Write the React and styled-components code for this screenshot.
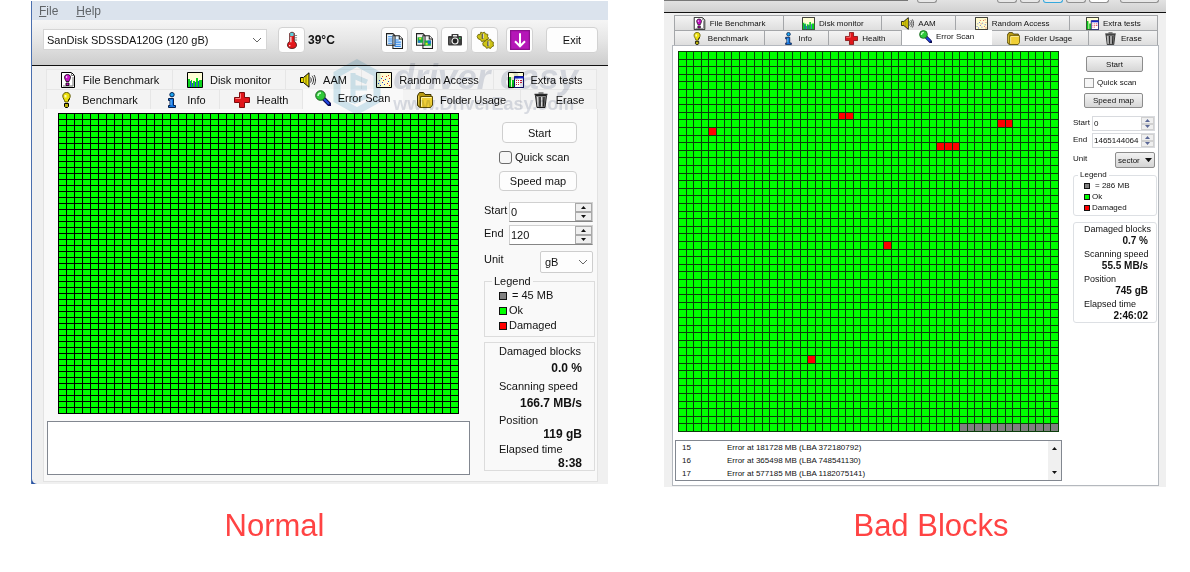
/* eslint-disable react/prop-types */
import React, { useId } from 'react';
import styled, { createGlobalStyle, css, ThemeProvider } from 'styled-components';

const modern = {
  flat: true,
  font: 11,
  labelFont: 11,
  valueFont: 12,
  icon: 16,
  tabHeight: 20,
  tabGap: 7,
  tabBg: '#f3f3f3',
  tabLine: '#e6e6e6',
  line: '#dcdcdc',
  panelBg: '#f9f9f9',
  fieldBorder: '#d0d0d0',
  swatch: 8,
};

const classic = {
  flat: false,
  font: 8,
  labelFont: 9,
  valueFont: 10,
  icon: 13,
  tabHeight: 15,
  tabGap: 4,
  tabBg: 'linear-gradient(#f4f4f4, #dedede)',
  tabLine: '#a4a6a9',
  line: '#dde0e4',
  panelBg: '#ffffff',
  fieldBorder: '#d8dade',
  swatch: 6,
};

const COLS = 50;
const ROWS = 50;

const cleanDrive = {
  width: 401,
  height: 301,
  line: '#000000',
  damaged: [],
  pending: 0,
};

const badDrive = {
  width: 381,
  height: 381,
  line: '#0b3d0b',
  damaged: [[4, 10, 1], [21, 8, 2], [42, 9, 2], [34, 12, 3], [27, 25, 1], [17, 40, 1]],
  pending: 13,
};

/* icons */

function Svg({ children, size }) {
  return (
    <IconBox viewBox="0 0 16 16" $size={size} aria-hidden="true">
      {children}
    </IconBox>
  );
}

const FileMark = () => (
  <Svg>
    <path d="M1.5.5h10l3 3v12h-13z" fill="#fff" stroke="#000" />
    <path d="M11.5.5v3h3M13 5v9H3" fill="none" stroke="#777" />
    <path d="M7.5 2.5c-2 0-3 1.300-3 2.800 0 1.600 1.200 2.700 1.500 4.200h3c.3-1.500 1.500-2.600 1.500-4.200 0-1.500-1-2.800-3-2.800z" fill="#c411c4" stroke="#000" strokeWidth=".8" />
    <path d="M6 11h3v2.500H6z" fill="#c411c4" stroke="#000" strokeWidth=".8" />
    <path d="M6 4.200h1.200v1.500H6z" fill="#fff" />
  </Svg>
);

const Monitor = () => (
  <Svg>
    <path d="M.5.500h15v15H.5z" fill="#ffffd5" stroke="#000" />
    <path d="M1 7h2v2h1v-1h1v7H1zM6 9h2v1h1V6h2v9H6zM12 8h3v7h-3z" fill="#0bd31c" />
    <path d="M3 9h1v6H3zM5 11h1v4H5zM8 10h1v5H8zM11 9h1v6h-1z" fill="#2645d8" />
  </Svg>
);

const Speaker = () => (
  <Svg>
    <path d="M.500 5.500h3L9 .800v14.400L3.500 10.500h-3z" fill="#e8d90c" stroke="#000" />
    <path d="M3.500 5.500v5M6 3.500v9" stroke="#6b6400" strokeWidth=".8" />
    <path d="M10.500 5.500c1 1.500 1 3.500 0 5M12 3.800c2 2.400 2 6 0 8.400M14 3c2 3 2 7 0 10" fill="none" stroke="#333" />
  </Svg>
);

const Scatter = () => (
  <Svg>
    <path d="M.5.500h15v15H.5z" fill="#fffbcf" stroke="#000" />
    <path d="M2 11h1v1H2zM4 13h1v1H4zM3 8h1v1H3zM6 10h1v1H6zM5 6h1v1H5zM9 7h1v1H9zM8 12h1v1H8zM12 9h1v1h-1z" fill="#1f3bd6" />
    <path d="M7 8h1v1H7zM10 4h1v1h-1zM12 3h1v1h-1zM11 11h1v1h-1zM13 6h1v1h-1zM6 4h1v1H6zM13 13h1v1h-1z" fill="#d8321f" />
  </Svg>
);

const Extra = () => (
  <Svg>
    <path d="M.5.500h15v15H.5z" fill="#ffffd5" stroke="#000" />
    <path d="M1 5h2v10H1zM4 8h2v7H4z" fill="#08c61a" />
    <path d="M6.500 4.500h9v11h-9z" fill="#fff" stroke="#10106b" />
    <path d="M6.500 5.500h9" stroke="#1524c8" strokeWidth="2" />
    <path d="M8 8h1v1H8zM10 8h1v1h-1zM12 8h2v1h-2zM8 10h1v1H8zM10 10h1v1h-1zM12 10h2v1h-2zM8 12h1v1H8zM10 12h1v1h-1z" fill="#d51d3c" />
  </Svg>
);

const Bulb = () => (
  <Svg>
    <path d="M7.500.500c-2.300 0-3.700 1.500-3.700 3.600 0 2.300 1.700 3.400 2.200 5.900h3c.5-2.500 2.200-3.600 2.200-5.900 0-2.100-1.400-3.600-3.700-3.600z" fill="#ecdf0b" stroke="#5e5800" />
    <path d="M5.500 11.500h4v3l-1 1h-2l-1-1z" fill="#b9ad08" stroke="#000" />
    <path d="M5.500 3h2v2.500h-2z" fill="#fffbb8" />
    <path d="M10.500 6.500L9.300 9" stroke="#000" />
  </Svg>
);

const InfoMark = () => (
  <Svg>
    <circle cx="8" cy="2.700" r="2.200" fill="#19a3f0" stroke="#06204e" />
    <path d="M4.500 6.500h5v7h2v2h-7v-2h1.500v-5H4.500z" fill="#1273e0" stroke="#06204e" />
    <path d="M7 8v5" stroke="#7cc8ff" />
  </Svg>
);

const Cross = () => (
  <Svg>
    <path d="M5.500.500h5v5h5v5h-5v5h-5v-5h-5v-5h5z" fill="#e0161b" stroke="#7d0b0d" />
    <path d="M6.500 6.500v-5M1.500 6.500h5" stroke="#ff8585" />
  </Svg>
);

const Magnifier = () => (
  <Svg>
    <path d="M8.500 8.500l6 6" stroke="#0a0a50" strokeWidth="4" strokeLinecap="round" />
    <path d="M9 9l5 5" stroke="#2148e6" strokeWidth="2" />
    <circle cx="5.500" cy="5.500" r="4.800" fill="#2fc93a" stroke="#1c5a20" />
    <path d="M3 6c0-2 1-3 3-3" fill="none" stroke="#c8ffca" strokeWidth="1.500" />
  </Svg>
);

const Folder = () => (
  <Svg>
    <path d="M.500 3.500l2-3h4l1.500 2h6v11l-1 2h-10l-2.500-2z" fill="#b89a12" stroke="#3c3202" />
    <path d="M3.500 4.500h12v8.500l-2 2.500h-10z" fill="#f0cf35" stroke="#5d4e06" />
    <path d="M4.500 6v8.500M4.500 5.500h10" stroke="#fff3ae" />
    <path d="M1.500 4v9" stroke="#e8cc4a" />
  </Svg>
);

const Bin = () => (
  <Svg>
    <path d="M2.500 3.500h11l-1.500 12H4z" fill="#8a8a8a" stroke="#1b1b1b" />
    <path d="M1.500 2.500h13" stroke="#2b2b2b" strokeWidth="1.500" />
    <path d="M5.500 1h5" stroke="#2b2b2b" />
    <path d="M7 5v9.500M11 5l-.5 9.500" stroke="#222" strokeWidth="1.300" />
    <path d="M4.500 5l.5 9.500M8.500 5v9.500" stroke="#dadada" />
  </Svg>
);

const Thermometer = () => (
  <Svg size={18}>
    <path d="M6 2q2-2 4 0v7q2 1.500 2 3.300Q12 15.500 8 15.500T4 12.300Q4 10.500 6 9z" fill="#e3171b" stroke="#4b1212" strokeWidth=".8" />
    <path d="M6.400 1.500h3v3h-3z" fill="#59d3df" />
    <path d="M7 5v5M6 12.500v1" stroke="#fff" />
    <path d="M10.500 4h2M10.500 6h2M10.500 8h2" stroke="#777" strokeWidth=".8" />
  </Svg>
);

const CopyText = () => (
  <Svg size={17}>
    <path d="M.500 1.500h6l2 2v9h-8zM6.500 3.500h6l3 3v9h-9z" fill="#e9f7ff" stroke="#222" />
    <path d="M2 4.500h4M2 6.500h4M2 8.500h4M2 10.500h4M8 7.500h4M8 9.500h6M8 11.500h6M8 13.500h6" stroke="#2d83e8" />
    <path d="M12.500 3.500v3h3" fill="#fff" stroke="#222" />
  </Svg>
);

const CopyImage = () => (
  <Svg size={17}>
    <path d="M.500 1.500h6l2 2v9h-8zM6.500 3.500h6l3 3v9h-9z" fill="#f1f1f1" stroke="#222" />
    <path d="M1.500 5h5v5h-5zM8 8h6v5H8z" fill="#18b03a" />
    <path d="M2 8h2v2H2zM11 8h3v3h-3z" fill="#1c6fd6" />
    <path d="M3 5.500h2v1.500H3zM9 10h2v2H9z" fill="#e7e32c" />
    <path d="M12.500 3.500v3h3" fill="#fff" stroke="#222" />
  </Svg>
);

const Camera = () => (
  <Svg size={16}>
    <path d="M1 5q0-1 1-1h2.500V2.500Q4.500 2 5 2h6q.5 0 .5.5V4H14q1 0 1 1v7q0 1.500-1 1.500H2q-1 0-1-1.500z" fill="#3a3a3a" />
    <path d="M6 3h4v1.500H6z" fill="#eee" />
    <circle cx="8" cy="9" r="3" fill="#222" stroke="#eee" strokeWidth="1.200" />
    <path d="M12 5.500h1.500v1.500H12z" fill="#39d452" />
    <path d="M3 6v6" stroke="#777" />
  </Svg>
);

const Gears = () => (
  <Svg size={18}>
    <g fill="#cfc416" stroke="#6a6305" strokeWidth=".8">
      <path d="M1 5l1-2 1.500.3L4.300 1l1.600.6L7.500 1l1 1.600 2 .4-.2 2 1 1.500-1.500 1L9 9.300l-2-.5-2 .6-1-1.700L2 7z" />
      <path d="M6 11l1-1.700L8.300 9l1-1.500 2 .5 1.700-.6.700 1.700 1.800.900-.3 1.700.6 1.500-1.800.800-1 1.500-1.900-.6-1.800.5-1-1.700-1.900-.7z" />
    </g>
    <path d="M5.800 2.500v4.500M10.700 9v4.500" stroke="#5a5a5a" strokeWidth="1.500" />
    <path d="M6.600 2.500v4M11.500 9v4" stroke="#fff" strokeWidth=".6" />
  </Svg>
);

const ArrowDown = () => (
  <Svg size={20}>
    <path d="M.500.500h15v15H.5z" fill="#b516b8" stroke="#8a108d" />
    <path d="M8 2.500v10M4 9l4 4 4-4" fill="none" stroke="#fff" strokeWidth="1.600" />
  </Svg>
);

const Chevron = () => (
  <Mark viewBox="0 0 10 6" $width={10} aria-hidden="true">
    <path d="M1 1l4 4 4-4" fill="none" stroke="#666" />
  </Mark>
);

const Triangle = ({ up, width = 5 }) => (
  <Mark viewBox="0 0 10 6" $width={width} aria-hidden="true">
    <path d={up ? 'M0 6l5-6 5 6z' : 'M0 0l5 6 5-6z'} fill="currentColor" />
  </Mark>
);

const topTabs = [
  { label: 'File Benchmark', Icon: FileMark },
  { label: 'Disk monitor', Icon: Monitor },
  { label: 'AAM', Icon: Speaker },
  { label: 'Random Access', Icon: Scatter },
  { label: 'Extra tests', Icon: Extra },
];

const bottomTabs = [
  { label: 'Benchmark', Icon: Bulb },
  { label: 'Info', Icon: InfoMark },
  { label: 'Health', Icon: Cross },
  { label: 'Error Scan', Icon: Magnifier, active: true },
  { label: 'Folder Usage', Icon: Folder },
  { label: 'Erase', Icon: Bin },
];

function Tabs({ top, bottom }) {
  return (
    <div role="tablist">
      {[[topTabs, top], [bottomTabs, bottom]].map(([tabs, columns]) => (
        <TabRow key={columns} $columns={columns}>
          {tabs.map(({ label, Icon, active }) => (
            <Tab key={label} type="button" role="tab" aria-selected={!!active} $active={active}>
              <Icon />
              {label}
            </Tab>
          ))}
        </TabRow>
      ))}
    </div>
  );
}

function BlockMap({ drive }) {
  const { width, height, line, damaged, pending } = drive;
  const w = (width - 1) / COLS;
  const h = (height - 1) / ROWS;
  let lines = '';
  for (let i = 0; i <= COLS; i += 1) lines += `M${Math.round(i * w) + 0.5} 0V${height}`;
  for (let i = 0; i <= ROWS; i += 1) lines += `M0 ${Math.round(i * h) + 0.5}H${width}`;

  return (
    <Map viewBox={`0 0 ${width} ${height}`} preserveAspectRatio="none" $height={height} role="img" aria-label="Block map">
      <rect width={width} height={height} fill="#00ff00" />
      {damaged.map(([x, y, n]) => (
        <rect key={`${x}-${y}`} x={x * w} y={y * h} width={n * w} height={h} fill="#ff0000" />
      ))}
      <rect x={(COLS - pending) * w} y={(ROWS - 1) * h} width={pending * w} height={h} fill="#808080" />
      <path d={lines} stroke={line} />
    </Map>
  );
}

function NumberField({ label, value }) {
  const id = useId();
  return (
    <FieldRow>
      <label htmlFor={id}>{label}</label>
      <Spinner>
        <input id={id} type="text" defaultValue={value} />
        <SpinButtons>
          <button type="button" aria-label={`${label} up`}><Triangle up /></button>
          <button type="button" aria-label={`${label} down`}><Triangle /></button>
        </SpinButtons>
      </Spinner>
    </FieldRow>
  );
}

function Controls({ end, unit, block, stats, flat }) {
  const id = useId();
  return (
    <Side>
      <Actions>
        <PushButton type="button">Start</PushButton>
        <Check>
          <input type="checkbox" />
          Quick scan
        </Check>
        <PushButton type="button" $low>Speed map</PushButton>
      </Actions>
      <Fields>
        <NumberField label="Start" value="0" />
        <NumberField label="End" value={end} />
        <FieldRow $unit>
          <label htmlFor={id}>Unit</label>
          <UnitSelect>
            <select id={id} defaultValue={unit}>
              <option>{unit}</option>
            </select>
            {flat ? <Chevron /> : <Triangle width={7} />}
          </UnitSelect>
        </FieldRow>
      </Fields>
      <Legend>
        <legend>Legend</legend>
        <LegendItem $color="#808080" $wide>{`= ${block}`}</LegendItem>
        <LegendItem $color="#00ff00">Ok</LegendItem>
        <LegendItem $color="#ff0000">Damaged</LegendItem>
      </Legend>
      <Stats>
        {stats.map(([name, value], i) => (
          <Stat key={name} $tight={i > 1}>
            <dt>{name}</dt>
            <dd>{value}</dd>
          </Stat>
        ))}
      </Stats>
    </Side>
  );
}

function NormalWindow() {
  return (
    <ThemeProvider theme={modern}>
      <Window>
        <MenuBar>
          <button type="button"><u>F</u>ile</button>
          <button type="button"><u>H</u>elp</button>
        </MenuBar>
        <Toolbar>
          <DriveSelect>
            <select aria-label="Drive" defaultValue="SanDisk SDSSDA120G (120 gB)">
              <option>SanDisk SDSSDA120G (120 gB)</option>
            </select>
            <Chevron />
          </DriveSelect>
          <ToolButton type="button" aria-label="Temperature"><Thermometer /></ToolButton>
          <Temperature>39°C</Temperature>
          <Tools>
            <ToolButton type="button" aria-label="Copy text"><CopyText /></ToolButton>
            <ToolButton type="button" aria-label="Copy image"><CopyImage /></ToolButton>
            <ToolButton type="button" aria-label="Screenshot"><Camera /></ToolButton>
            <ToolButton type="button" aria-label="Options"><Gears /></ToolButton>
          </Tools>
          <ToolButton type="button" aria-label="Save"><ArrowDown /></ToolButton>
          <ExitButton type="button">Exit</ExitButton>
        </Toolbar>
        <Body>
          <Tabs top="127fr 113fr 76fr 132fr 103fr" bottom="105fr 69fr 83fr 100fr 118fr 76fr" />
          <Panel>
            <Main>
              <BlockMap drive={cleanDrive} />
              <Log />
            </Main>
            <Controls
              flat
              end="120"
              unit="gB"
              block="45 MB"
              stats={[['Damaged blocks', '0.0 %'], ['Scanning speed', '166.7 MB/s'], ['Position', '119 gB'], ['Elapsed time', '8:38']]}
            />
          </Panel>
          <Watermark aria-hidden="true">
            <svg viewBox="0 0 48 56" width="48" height="56">
              <path d="M24 4l20 11v26L24 52 4 41V15z" fill="none" stroke="#6fb4d2" strokeWidth="7" />
              <path d="M20 14v30M20 17l14 6M20 29h14M20 43l14-6" fill="none" stroke="#6fb4d2" strokeWidth="5" />
            </svg>
            <div>
              <Brand>driver easy</Brand>
              <Site>www.DriverEasy.com</Site>
            </div>
          </Watermark>
        </Body>
      </Window>
    </ThemeProvider>
  );
}

function BadBlocksWindow() {
  const errors = [
    [15, 'Error at 181728 MB (LBA 372180792)'],
    [16, 'Error at 365498 MB (LBA 748541130)'],
    [17, 'Error at 577185 MB (LBA 1182075141)'],
  ];
  return (
    <ThemeProvider theme={classic}>
      <Window>
        <ToolbarEdge>
          <EdgeCombo />
          <EdgeButton />
          <EdgeGap />
          <EdgeButton />
          <EdgeButton />
          <EdgeButton $hot />
          <EdgeButton />
          <EdgeButton $light />
          <EdgeButton $wide />
        </ToolbarEdge>
        <Body>
          <Tabs top="110fr 98fr 73fr 114fr 88fr" bottom="91fr 64fr 73fr 89fr 97fr 69fr" />
          <Panel>
            <Main>
              <BlockMap drive={badDrive} />
              <Log>
                <table>
                  <tbody>
                    {errors.map(([n, text]) => (
                      <tr key={n}>
                        <td>{n}</td>
                        <td>{text}</td>
                      </tr>
                    ))}
                  </tbody>
                </table>
                <ScrollBar>
                  <button type="button" aria-label="Scroll up"><Triangle up /></button>
                  <button type="button" aria-label="Scroll down"><Triangle /></button>
                </ScrollBar>
              </Log>
            </Main>
            <Controls
              end="1465144064"
              unit="sector"
              block="286 MB"
              stats={[['Damaged blocks', '0.7 %'], ['Scanning speed', '55.5 MB/s'], ['Position', '745 gB'], ['Elapsed time', '2:46:02']]}
            />
          </Panel>
        </Body>
      </Window>
    </ThemeProvider>
  );
}

function App() {
  return (
    <Page>
      <GlobalStyle />
      <Figure>
        <NormalWindow />
        <Caption $shift={-90}>Normal</Caption>
      </Figure>
      <Figure>
        <BadBlocksWindow />
        <Caption $shift={32}>Bad Blocks</Caption>
      </Figure>
    </Page>
  );
}

const GlobalStyle = createGlobalStyle`
  *, *::before {
    box-sizing: border-box;
  }

  body {
    margin: 0;
    background: white;
    color: #111;
    font-family: 'Liberation Sans', Arial, sans-serif;
  }

  button, input, select {
    font: inherit;
    color: inherit;
    margin: 0;
    padding: 0;
  }
`;

const Page = styled.main`
  display: grid;
  grid-template-columns: minmax(0, 577fr) minmax(0, 502fr);
  gap: 56px;
  padding: 0 24px 0 31px;
`;

const Figure = styled.figure`
  margin: 0;
`;

const Caption = styled.figcaption`
  padding-left: ${({ $shift }) => Math.max($shift, 0)}px;
  padding-right: ${({ $shift }) => Math.max(-$shift, 0)}px;
  margin-top: ${({ $shift }) => ($shift < 0 ? 24 : 21)}px;
  font-size: 31px;
  line-height: 36px;
  text-align: center;
  color: #ff4343;
`;

const Window = styled.section`
  font-size: ${({ theme }) => theme.font}px;
  ${({ theme }) => theme.flat && css`
    margin-top: 1px;
    background: #2852a3;
    border-left: 1px solid #4a6fae;
  `}
`;

const IconBox = styled.svg`
  flex: none;
  width: ${({ $size, theme }) => $size || theme.icon}px;
  height: ${({ $size, theme }) => $size || theme.icon}px;
`;

const Mark = styled.svg`
  width: ${({ $width }) => $width}px;
  height: auto;
  pointer-events: none;
`;

const MenuBar = styled.nav`
  display: flex;
  gap: 18px;
  height: 19px;
  padding-left: 7px;
  background: #dbe3ed;

  button {
    border: none;
    background: none;
    font-size: 12px;
    color: #606468;
  }
`;

const Toolbar = styled.div`
  display: flex;
  align-items: flex-start;
  height: 46px;
  padding: 7px 10px 0 11px;
  background: linear-gradient(#f5f5f5, #e6e6e6 45%, #cdcdcd);
  border-bottom: 1px solid #111;
`;

const selectBox = css`
  display: grid;
  align-items: center;

  select, svg {
    grid-area: 1 / 1;
  }

  select {
    appearance: none;
    width: 100%;
    height: 100%;
    border: none;
    background: none;
    outline: none;
  }

  svg {
    justify-self: end;
  }
`;

const DriveSelect = styled.div`
  ${selectBox}
  width: 224px;
  height: 21px;
  margin: 2px 11px 0 0;
  padding: 0 4px 0 3px;
  background: white;
  border: 1px solid #d5d5d5;
`;

const ToolButton = styled.button`
  display: flex;
  align-items: center;
  justify-content: center;
  width: 27px;
  height: 26px;
  background: #fdfdfd;
  border: 1px solid #d2d2d2;
  border-radius: 4px;
`;

const ExitButton = styled(ToolButton)`
  width: 52px;
  margin-left: 13px;
`;

const Temperature = styled.span`
  padding-left: 3px;
  font-size: 12px;
  font-weight: 700;
  line-height: 27px;
`;

const Tools = styled.div`
  display: flex;
  gap: 3px;
  margin: 0 8px 0 auto;
`;

const ToolbarEdge = styled.div`
  display: flex;
  gap: 3px;
  height: 13px;
  padding-right: 7px;
  background: linear-gradient(#e2e2e2, #d0d0d0);
  border-bottom: 1px solid #111;
`;

const EdgeCombo = styled.span`
  flex: none;
  width: 244px;
  height: 1px;
  margin-right: 6px;
  background: #777;
`;

const EdgeGap = styled.span`
  flex: 1;
`;

const EdgeButton = styled.span`
  width: ${({ $wide }) => ($wide ? 39 : 20)}px;
  height: 3px;
  margin-left: ${({ $wide }) => ($wide ? 8 : 0)}px;
  background: ${({ $light }) => ($light ? '#fff' : '#e8e8e8')};
  border: 1px solid ${({ $hot }) => ($hot ? '#35a8dc' : '#909090')};
  border-top: none;
  border-radius: 0 0 3px 3px;
`;

const Body = styled.div`
  position: relative;
  background: #f0f0f0;
  padding: ${({ theme }) => (theme.flat ? '3px 10px 2px 11px' : '2px 7px 1px 8px')};
  border-bottom-left-radius: ${({ theme }) => (theme.flat ? 5 : 0)}px;
`;

const TabRow = styled.div`
  display: grid;
  grid-template-columns: ${({ $columns }) => $columns};
  padding: ${({ theme }) => (theme.flat ? '0 1px 0 3px' : '0 1px 0 2px')};
`;

const Tab = styled.button`
  display: flex;
  align-items: center;
  justify-content: center;
  gap: ${({ theme }) => theme.tabGap}px;
  height: ${({ theme }) => theme.tabHeight}px;
  white-space: nowrap;
  background: ${({ theme }) => theme.tabBg};
  border: 1px solid ${({ theme }) => theme.tabLine};
  border-width: 1px 1px 0 0;

  &:first-child {
    border-left-width: 1px;
  }

  ${({ $active, theme }) => $active && css`
    background: ${theme.panelBg};
    border-color: ${theme.panelBg};
    padding-bottom: 4px;
  `}
`;

const Panel = styled.div`
  display: flex;
  gap: ${({ theme }) => (theme.flat ? 14 : 11)}px;
  padding: ${({ theme }) => (theme.flat ? '3px 2px 6px 3px' : '5px 1px 4px 2px')};
  background: ${({ theme }) => theme.panelBg};
  border: 1px solid ${({ theme }) => (theme.flat ? '#e2e2e2' : '#b4b8be')};
  border-top-width: ${({ theme }) => (theme.flat ? 0 : 1)}px;
`;

const Main = styled.div`
  flex: 1;
  min-width: 0;
  display: flex;
  flex-direction: column;
  padding-top: ${({ theme }) => (theme.flat ? 1 : 0)}px;
`;

const Map = styled.svg`
  align-self: stretch;
  height: ${({ $height }) => $height}px;
  margin: 0 ${({ theme }) => (theme.flat ? 11 : 3)}px;
  shape-rendering: crispEdges;
`;

const Log = styled.div`
  display: flex;
  justify-content: space-between;
  height: ${({ theme }) => (theme.flat ? 54 : 41)}px;
  margin-top: ${({ theme }) => (theme.flat ? 7 : 8)}px;
  background: white;
  border: 1px solid #828790;

  table {
    align-self: flex-start;
    border-collapse: collapse;
    line-height: 13px;
  }

  td {
    padding: 0 0 0 6px;
  }

  td:first-child {
    width: 45px;
  }
`;

const ScrollBar = styled.div`
  display: flex;
  flex-direction: column;
  justify-content: space-between;
  width: 13px;
  background: #f0f0f0;

  button {
    height: 15px;
    border: none;
    background: none;
    line-height: 0;
  }
`;

const Side = styled.div`
  flex: none;
  width: ${({ theme }) => (theme.flat ? 111 : 84)}px;
`;

const Actions = styled.div`
  display: flex;
  flex-direction: column;
  gap: ${({ theme }) => (theme.flat ? 7 : 5)}px;
  padding: ${({ theme }) => (theme.flat ? '10px 18px 0 15px' : '5px 14px 0 11px')};
`;

const PushButton = styled.button`
  height: ${({ theme, $low }) => (theme.flat ? 21 : 16) - ($low ? 1 : 0)}px;
  margin-left: ${({ theme, $low }) => ($low ? 0 : theme.flat ? 3 : 2)}px;
  font-size: ${({ theme }) => theme.font}px;
  background: ${({ theme }) => (theme.flat ? '#fdfdfd' : 'linear-gradient(#f4f4f4, #d6d6d6)')};
  border: 1px solid ${({ theme }) => (theme.flat ? '#cfcfcf' : '#8c8c8c')};
  border-radius: ${({ theme }) => (theme.flat ? 4 : 2)}px;
`;

const Check = styled.label`
  display: flex;
  align-items: center;
  gap: 3px;
  height: ${({ theme }) => (theme.flat ? 14 : 11)}px;
  white-space: nowrap;

  input {
    appearance: none;
    flex: none;
    width: ${({ theme }) => (theme.flat ? 13 : 10)}px;
    height: ${({ theme }) => (theme.flat ? 13 : 10)}px;
    background: #f6f6f6;
    border: 1px solid ${({ theme }) => (theme.flat ? '#6c6c6c' : '#9a9a9a')};
    border-radius: ${({ theme }) => (theme.flat ? 3 : 0)}px;
  }
`;

const Fields = styled.div`
  display: flex;
  flex-direction: column;
  gap: ${({ theme }) => (theme.flat ? 3 : 2)}px;
  margin-top: ${({ theme }) => (theme.flat ? 11 : 8)}px;
  padding-right: 2px;
`;

const FieldRow = styled.div`
  display: flex;
  justify-content: space-between;
  align-items: flex-start;
  margin-top: ${({ $unit, theme }) => ($unit ? (theme.flat ? 3 : 2) : 0)}px;

  label {
    line-height: ${({ theme }) => (theme.flat ? 17 : 14)}px;
  }
`;

const Spinner = styled.div`
  display: flex;
  width: ${({ theme }) => (theme.flat ? 84 : 63)}px;
  height: ${({ theme }) => (theme.flat ? 20 : 15)}px;
  background: white;
  border: 1px solid ${({ theme }) => theme.fieldBorder};
  border-bottom-color: ${({ theme }) => (theme.flat ? '#868686' : theme.fieldBorder)};

  input {
    flex: 1;
    min-width: 0;
    padding-left: 1px;
    border: none;
    outline: none;
    background: none;
  }
`;

const SpinButtons = styled.div`
  display: flex;
  flex-direction: column;
  width: ${({ theme }) => (theme.flat ? 17 : 13)}px;

  button {
    flex: 1;
    display: flex;
    align-items: center;
    justify-content: center;
    min-height: 0;
    background: #efefef;
    border: 1px solid ${({ theme }) => (theme.flat ? '#a9a9a9' : '#d0d0d0')};
    color: ${({ theme }) => (theme.flat ? '#111' : '#5a6796')};
  }
`;

const UnitSelect = styled.div`
  ${selectBox}
  width: ${({ theme }) => (theme.flat ? 53 : 40)}px;
  height: ${({ theme }) => (theme.flat ? 22 : 16)}px;
  padding: 0 ${({ theme }) => (theme.flat ? 4 : 2)}px;
  background: ${({ theme }) => (theme.flat ? '#fdfdfd' : 'linear-gradient(#f2f2f2, #d4d4d4)')};
  border: 1px solid ${({ theme }) => (theme.flat ? '#cdcdcd' : '#8c8c8c')};
  border-radius: 2px;
`;

const Legend = styled.fieldset`
  min-width: 0;
  margin: ${({ theme }) => (theme.flat ? '2px 0 5px' : '2px 0 6px')};
  padding: 0 0 ${({ theme }) => (theme.flat ? 3 : 2)}px ${({ theme }) => (theme.flat ? 14 : 10)}px;
  border: 1px solid ${({ theme }) => theme.line};
  border-radius: ${({ theme }) => (theme.flat ? 0 : 3)}px;

  legend {
    margin-left: ${({ theme }) => (theme.flat ? -7 : -6)}px;
    padding: 0 2px;
    line-height: ${({ theme }) => (theme.flat ? 13 : 10)}px;
  }
`;

const LegendItem = styled.div`
  display: flex;
  align-items: center;
  gap: ${({ $wide }) => ($wide ? 5 : 2)}px;
  line-height: ${({ theme }) => (theme.flat ? 15 : 11)}px;

  &::before {
    content: '';
    width: ${({ theme }) => theme.swatch}px;
    height: ${({ theme }) => theme.swatch}px;
    background: ${({ $color }) => $color};
    border: 1px solid #111;
  }
`;

const Stats = styled.dl`
  margin: 0;
  padding: ${({ theme }) => (theme.flat ? '0 12px 0 14px' : '0 8px 0 10px')};
  border: 1px solid ${({ theme }) => theme.line};
  border-radius: ${({ theme }) => (theme.flat ? 0 : 3)}px;
`;

const Stat = styled.div`
  line-height: ${({ theme, $tight }) => (theme.flat ? ($tight ? 14 : 17) : 12)}px;
  white-space: nowrap;

  & + & {
    margin-top: ${({ theme }) => (theme.flat ? 2 : 1)}px;
  }

  dt {
    font-size: ${({ theme }) => theme.labelFont}px;
  }

  dd {
    margin: 0;
    font-size: ${({ theme }) => theme.valueFont}px;
    font-weight: 700;
    text-align: right;
  }
`;

/* lies over the tab strip */
const Watermark = styled.div`
  position: absolute;
  top: -7px;
  right: 30px;
  display: flex;
  gap: 12px;
  color: #8d96ad;
  opacity: 0.3;
  mix-blend-mode: multiply;
  pointer-events: none;
`;

const Brand = styled.div`
  font-size: 35px;
  font-weight: 700;
  font-style: italic;
  line-height: 35px;
`;

const Site = styled.div`
  font-size: 18px;
  font-weight: 700;
  line-height: 20px;
`;

export default App;
